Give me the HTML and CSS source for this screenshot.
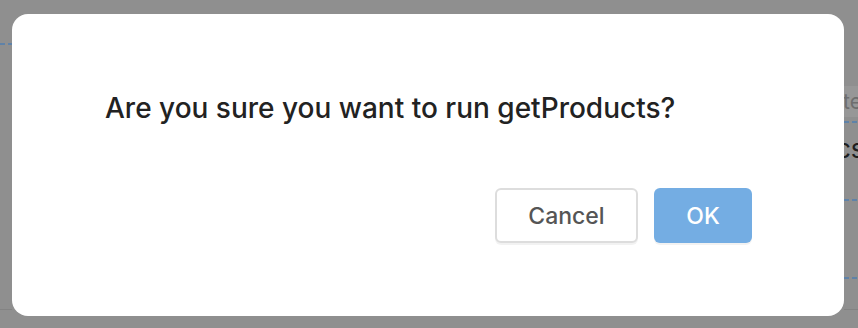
FILE: index.html
```html
<!DOCTYPE html>
<html lang="en">
<head>
<meta charset="utf-8">
<title>Confirm</title>
<link rel="stylesheet" href="styles.css">
</head>
<body>
<div class="backdrop">
  <div class="strip strip-left">
    <div class="gap g43"></div>
    <div class="dash"></div>
    <div class="fill"></div>
    <div class="foot"></div>
  </div>
  <div class="spacer"></div>
  <div class="strip strip-right">
    <div class="gap g86"></div>
    <div class="head"><span>te</span></div>
    <div class="gap g4"></div>
    <div class="dash"></div>
    <div class="cell"><span>cs</span></div>
    <div class="dash"></div>
    <div class="gap g76"></div>
    <div class="dash"></div>
    <div class="fill"></div>
    <div class="foot"></div>
  </div>
</div>

<div class="modal" role="dialog">
  <p class="message">Are you sure you want to run getProducts?</p>
  <div class="actions">
    <button class="btn btn-cancel">Cancel</button>
    <button class="btn btn-ok">OK</button>
  </div>
</div>
</body>
</html>
```

FILE: styles.css
```css
html, body {
  margin: 0;
  padding: 0;
  width: 858px;
  height: 328px;
  overflow: hidden;
  background: #8f8f8f;
  font-family: Inter, "Noto Sans", "Liberation Sans", sans-serif;
}

.backdrop {
  display: flex;
  width: 858px;
  height: 328px;
}

.strip {
  display: flex;
  flex-direction: column;
  overflow: hidden;
}
.strip-left { width: 12px; }
.strip-right { width: 14px; }
.spacer { flex: 1; }

.gap { flex: none; }
.g43 { height: 43px; }
.g86 { height: 86px; }
.g4 { height: 4px; }
.g76 { height: 76px; }
.fill { flex: 1; }

.dash {
  flex: none;
  height: 2px;
  background: repeating-linear-gradient(90deg, #5f82a8 0 5px, transparent 5px 8px);
}

.head {
  flex: none;
  height: 31px;
  background: #979797;
  color: #6e6e6e;
  font-size: 21px;
  line-height: 31px;
  white-space: nowrap;
}
.head span { margin-left: -1px; }

.cell {
  flex: none;
  height: 76px;
  color: #1e1e1e;
  font-size: 26px;
  line-height: 52px;
  white-space: nowrap;
}
.cell span { margin-left: -8px; }

.foot {
  flex: none;
  height: 6px;
  border-top: 1px solid #838383;
  margin-bottom: 12px;
}

.modal {
  position: absolute;
  left: 12px;
  top: 14px;
  width: 832px;
  height: 302px;
  box-sizing: border-box;
  background: #ffffff;
  border-radius: 16px;
  padding: 74px 92px 0 93px;
  display: flex;
  flex-direction: column;
}

.message {
  margin: 0;
  font-size: 28px;
  line-height: 40px;
  font-weight: 500;
  color: #222222;
  letter-spacing: 0;
}

.actions {
  margin-top: 60px;
  display: flex;
  justify-content: flex-end;
  gap: 16px;
}

.btn {
  height: 55px;
  box-sizing: border-box;
  border-radius: 6px;
  font-family: inherit;
  font-size: 23px;
  font-weight: 500;
  cursor: pointer;
  padding: 0;
  box-shadow: 0 2px 0 rgba(0, 0, 0, 0.05);
}

.btn-cancel {
  width: 143px;
  background: #ffffff;
  border: 2px solid #dddddd;
  color: #555555;
}

.btn-ok {
  width: 98px;
  background: #74ade3;
  border: none;
  color: #ffffff;
}
```
